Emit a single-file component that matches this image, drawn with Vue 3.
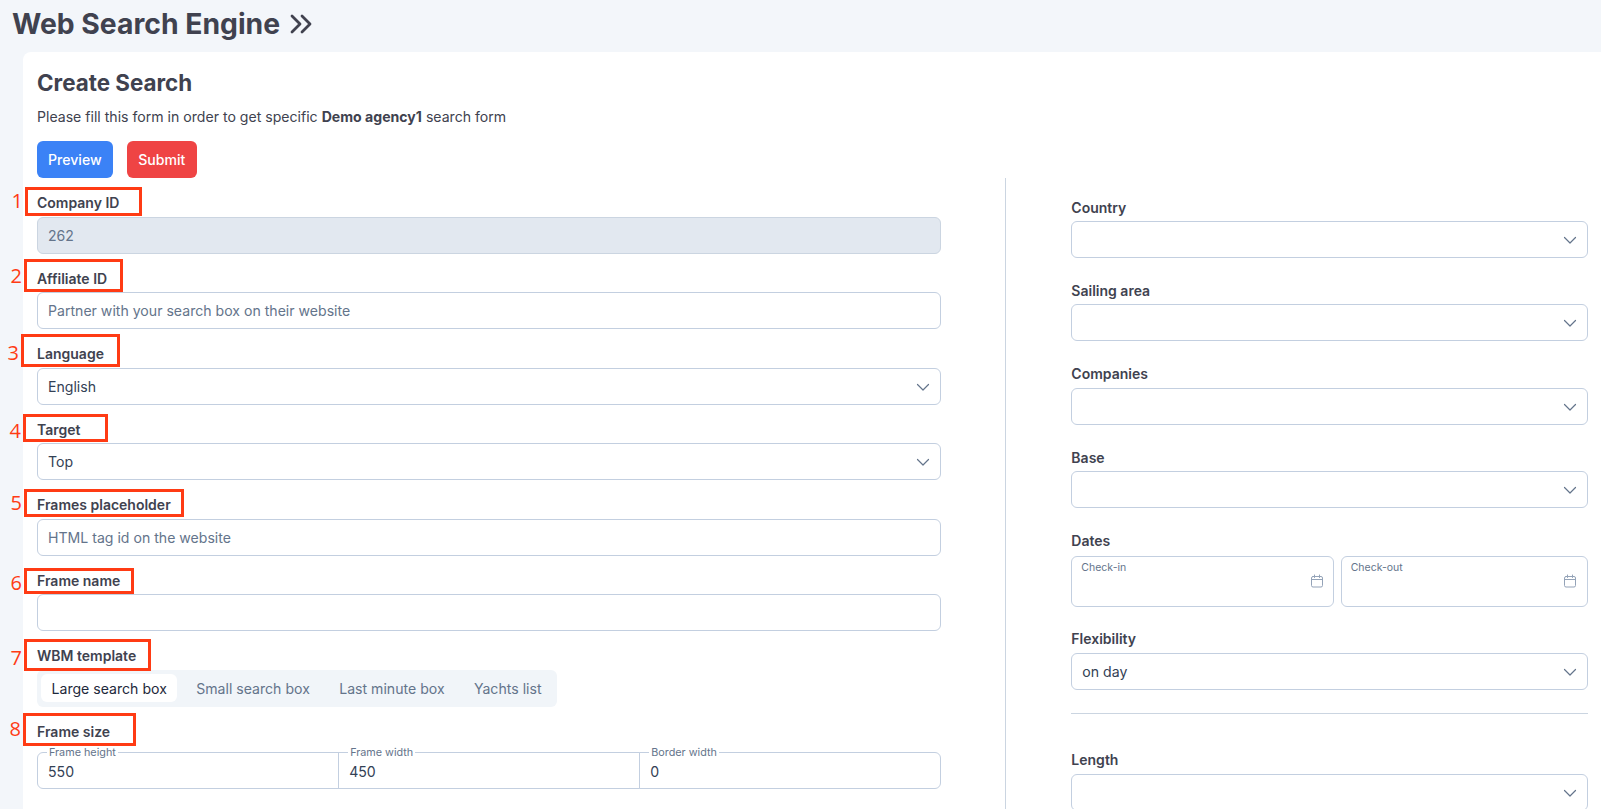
<script setup>
const leftTop = [
  { label: 'Company ID', value: '262', kind: 'disabled' },
  { label: 'Affiliate ID', placeholder: 'Partner with your search box on their website', kind: 'input' },
  { label: 'Language', value: 'English', kind: 'select' },
  { label: 'Target', value: 'Top', kind: 'select' },
  { label: 'Frames placeholder', placeholder: 'HTML tag id on the website', kind: 'input' },
  { label: 'Frame name', value: '', kind: 'input' },
]
const marks = [
  { n: 1, cls: 'm1' }, { n: 2, cls: 'm2' }, { n: 3, cls: 'm3' }, { n: 4, cls: 'm4' },
  { n: 5, cls: 'm5' }, { n: 6, cls: 'm6' }, { n: 7, cls: 'm7' }, { n: 8, cls: 'm8' },
]
const tabs = ['Large search box', 'Small search box', 'Last minute box', 'Yachts list']
const frame = [
  { label: 'Frame height', value: '550' },
  { label: 'Frame width', value: '450' },
  { label: 'Border width', value: '0' },
]
const rightTop = ['Country', 'Sailing area', 'Companies', 'Base']
</script>

<template>
  <div class="page">
    <h1 class="title">
      Web Search Engine
      <svg class="chev" viewBox="0 0 22 20" fill="none" stroke="currentColor" stroke-width="2.8" stroke-linecap="round" stroke-linejoin="round"><path d="M2 2l8 8-8 8" /><path d="M12 2l8 8-8 8" /></svg>
    </h1>
    <main class="card">
      <h2 class="heading">Create Search</h2>
      <p class="intro">Please fill this form in order to get specific <b>Demo agency1</b> search form</p>
      <div class="actions">
        <button class="btn blue">Preview</button>
        <button class="btn red">Submit</button>
      </div>
      <div class="cols">
        <section class="left">
          <div v-for="f in leftTop" :key="f.label" class="field">
            <label class="lbl">{{ f.label }}</label>
            <div class="box" :class="{ disabled: f.kind === 'disabled' }">
              <span v-if="f.value" class="val">{{ f.value }}</span>
              <span v-else class="ph">{{ f.placeholder }}</span>
              <svg v-if="f.kind === 'select'" class="caret" viewBox="0 0 16 16" fill="none" stroke="currentColor" stroke-width="1.2" stroke-linecap="round" stroke-linejoin="round"><path d="M2.5 5.5 8 11l5.5-5.5" /></svg>
            </div>
          </div>
          <div class="field">
            <label class="lbl">WBM template</label>
            <div class="tabs">
              <span v-for="(t, i) in tabs" :key="t" class="tab" :class="{ active: i === 0 }">{{ t }}</span>
            </div>
          </div>
          <div class="field frame-field">
            <label class="lbl">Frame size</label>
            <div class="group">
              <div v-for="c in frame" :key="c.label" class="cell">
                <span class="legend">{{ c.label }}</span>
                <span class="val">{{ c.value }}</span>
              </div>
            </div>
          </div>
        </section>
        <section class="right">
          <div v-for="l in rightTop" :key="l" class="rfield">
            <label class="lbl">{{ l }}</label>
            <div class="box">
              <svg class="caret" viewBox="0 0 16 16" fill="none" stroke="currentColor" stroke-width="1.2" stroke-linecap="round" stroke-linejoin="round"><path d="M2.5 5.5 8 11l5.5-5.5" /></svg>
            </div>
          </div>
          <div class="rfield dates-field">
            <label class="lbl">Dates</label>
            <div class="dates">
              <div v-for="d in ['Check-in', 'Check-out']" :key="d" class="date">
                <span class="dlabel">{{ d }}</span>
                <svg class="cal" viewBox="0 0 14 14" fill="none" stroke="currentColor" stroke-width="1" stroke-linecap="round" stroke-linejoin="round"><rect x="1.5" y="2.5" width="11" height="10.5" rx="1.5" /><path d="M1.5 5.5h11M4.5 1v2.5M9.5 1v2.5" /></svg>
              </div>
            </div>
          </div>
          <div class="rfield flex-field">
            <label class="lbl">Flexibility</label>
            <div class="box">
              <span class="val">on day</span>
              <svg class="caret" viewBox="0 0 16 16" fill="none" stroke="currentColor" stroke-width="1.2" stroke-linecap="round" stroke-linejoin="round"><path d="M2.5 5.5 8 11l5.5-5.5" /></svg>
            </div>
          </div>
          <hr class="rule" />
          <div class="rfield">
            <label class="lbl">Length</label>
            <div class="box">
              <svg class="caret" viewBox="0 0 16 16" fill="none" stroke="currentColor" stroke-width="1.2" stroke-linecap="round" stroke-linejoin="round"><path d="M2.5 5.5 8 11l5.5-5.5" /></svg>
            </div>
          </div>
        </section>
      </div>
    </main>
    <div v-for="m in marks" :key="m.n" class="mark" :class="m.cls">
      <span class="num">{{ m.n }}</span>
      <span class="frame"></span>
    </div>
  </div>
</template>

<style>
html, body { margin: 0; overflow: hidden; background: #f3f6fa; }
</style>

<style scoped>
.page {
  position: relative;
  height: 809px;
  overflow: hidden;
  background: #f3f6fa;
  color: #40424f;
  font-family: Inter, "Liberation Sans", sans-serif;
  font-size: 14.1px;
}
.title {
  margin: 0;
  height: 52px;
  padding: 6px 0 10px 12px;
  box-sizing: border-box;
  font-size: 28.3px;
  line-height: 36px;
  font-weight: 700;
  display: flex;
  align-items: center;
  gap: 10px;
}
.chev { width: 22px; height: 20px; }
.card {
  margin-left: 23px;
  background: #fff;
  border-radius: 8px 0 0 0;
  padding: 17px 0 0 14px;
  height: 757px;
  box-sizing: border-box;
}
.heading { margin: 0; font-size: 22.4px; line-height: 28px; font-weight: 700; }
.intro { margin: 10px 0 0; font-size: 14.1px; line-height: 20px; color: #40424f; }
.intro b { font-weight: 700; }
.actions { display: flex; gap: 14px; margin-top: 14px; }
.btn {
  height: 37px;
  border: 0;
  border-radius: 6px;
  padding: 0 11px;
  color: #fff;
  font: 500 14.1px Inter, sans-serif;
}
.blue { background: #3b82f6; }
.red { background: #ef4444; padding: 0 11.5px; }
.cols { display: flex; }
.left { width: 905px; padding-top: 13.5px; }
.right {
  margin-left: 64px;
  width: 596px;
  border-left: 1px solid #cbd5e1;
  padding: 18px 13px 0 65px;
  box-sizing: border-box;
}
.field { margin-bottom: 13.56px; }
.lbl { display: block; font-size: 14px; line-height: 20px; font-weight: 600; color: #40424f; padding: 1.5px 0 3.5px; }
.right .lbl { padding: 1.5px 0 3.5px; }
.box {
  position: relative;
  height: 37px;
  box-sizing: border-box;
  border: 1px solid #c3cfe0;
  border-radius: 6px;
  padding: 0 10px;
  display: flex;
  align-items: center;
  background: #fff;
}
.box.disabled { background: #e2e8f0; border-color: #cbd5e1; }
.disabled .val { color: #64748b; }
.val { color: #334155; }
.ph { color: #64748b; }
.caret { position: absolute; right: 9px; top: 10px; width: 16px; height: 16px; color: #64748b; }
.tabs {
  display: inline-flex;
  height: 37px;
  box-sizing: border-box;
  align-items: center;
  background: #f1f5f9;
  border-radius: 6px;
  padding: 4px;
  vertical-align: top;
}
.tab { padding: 0 10.5px; margin-right: 8.3px; height: 28px; line-height: 29px; border-radius: 6px; color: #64748b; white-space: nowrap; }
.tab:last-child { margin-right: 0; padding-right: 11.5px; }
.tab.active { background: #fff; color: #1e293b; }
.frame-field .lbl { padding-bottom: 10.5px; }
.group { display: flex; height: 37px; }
.cell {
  position: relative;
  flex: 1;
  box-sizing: border-box;
  border: 1px solid #c3cfe0;
  margin-left: -1px;
  padding: 10px 0 0 10px;
  background: #fff;
}
.cell:first-child { margin-left: 0; border-radius: 6px 0 0 6px; }
.cell:last-child { border-radius: 0 6px 6px 0; }
.legend {
  position: absolute;
  top: -7px;
  left: 9px;
  padding: 0 2px;
  background: #fff;
  font-size: 10.8px;
  line-height: 13px;
  color: #64748b;
}
.rfield { margin-bottom: 21.4px; }
.right .dates-field .lbl { padding-bottom: 4.5px; }
.dates-field { margin-bottom: 21px; }
.flex-field { margin-bottom: 0; }
.dates { display: flex; gap: 7px; }
.date {
  position: relative;
  flex: 1 1 248px;
  height: 51px;
  box-sizing: border-box;
  border: 1px solid #c3cfe0;
  border-radius: 6px;
}
.date:first-child { flex: 1 1 263px; }
.dlabel { position: absolute; left: 9px; top: 4px; font-size: 10.5px; line-height: 14px; color: #64748b; }
.cal { position: absolute; right: 9px; top: 17px; width: 14px; height: 14px; color: #94a3b8; }
.date:last-child .cal { right: 10px; }
.rule { border: 0; border-top: 1px solid #cbd5e1; margin: 23px 0 35px; }
.mark { position: absolute; }
.frame { position: absolute; inset: 0; border: 3px solid #ff3b14; box-sizing: border-box; }
.num {
  position: absolute;
  right: 100%;
  margin-right: 2px;
  top: 50%;
  transform: translateY(-50%);
  font-family: "Open Sans", sans-serif;
  font-size: 20px;
  line-height: 24px;
  color: #ff3b14;
}
.m1 { left: 25px; top: 187px; width: 117px; height: 29px; }
.m1 .num { margin-top: -1px; }
.m2 { left: 24px; top: 259px; width: 99px; height: 33px; }
.m3 { left: 21px; top: 334px; width: 99px; height: 33px; }
.m3 .num { margin-top: 2px; }
.m4 { left: 23px; top: 414px; width: 85px; height: 28px; }
.m4 .num { margin-top: 3px; }
.m5 { left: 24px; top: 489px; width: 160px; height: 28px; }
.m6 { left: 24px; top: 568px; width: 110px; height: 26px; }
.m6 .num { margin-top: 2px; }
.m7 { left: 24px; top: 639px; width: 127px; height: 32px; }
.m7 .num { margin-top: 3px; }
.m8 { left: 23px; top: 713px; width: 113px; height: 33px; }
.m8 .num { margin-top: -1px; }
</style>
